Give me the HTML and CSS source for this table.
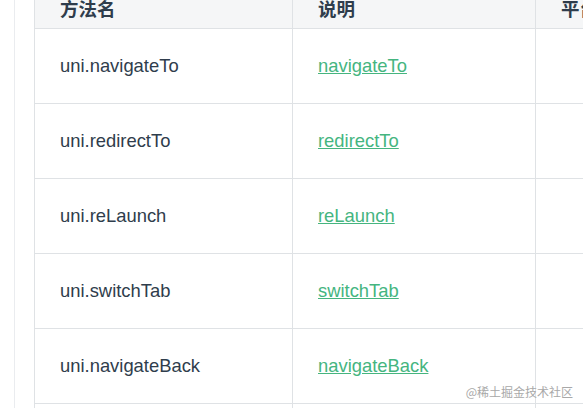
FILE: index.html
```html
<!DOCTYPE html>
<html lang="zh-CN">
<head>
<meta charset="utf-8">
<link rel="stylesheet" href="styles.css">
</head>
<body>
<div class="page">
  <div class="content">
    <table class="api-table">
      <thead>
        <tr><th class="c1">方法名</th><th class="c2">说明</th><th class="c3">平台差异说明</th></tr>
      </thead>
      <tbody>
        <tr><td>uni.navigateTo</td><td><a href="#">navigateTo</a></td><td></td></tr>
        <tr><td>uni.redirectTo</td><td><a href="#">redirectTo</a></td><td></td></tr>
        <tr><td>uni.reLaunch</td><td><a href="#">reLaunch</a></td><td></td></tr>
        <tr><td>uni.switchTab</td><td><a href="#">switchTab</a></td><td></td></tr>
        <tr><td>uni.navigateBack</td><td><a href="#">navigateBack</a></td><td></td></tr>
        <tr><td>uni.preloadPage</td><td><a href="#">preloadPage</a></td><td></td></tr>
      </tbody>
    </table>
  </div>
  <div class="watermark">@稀土掘金技术社区</div>
</div>
</body>
</html>
```
FILE: styles.css
```css
html, body {
  margin: 0;
  padding: 0;
  background: #fff;
  overflow: hidden;
  width: 583px;
  height: 408px;
}
.page {
  position: relative;
  height: 408px;
  padding-left: 14px;
  overflow: hidden;
  font-family: "Liberation Sans", Arial, "Noto Sans CJK SC", sans-serif;
  color: #2f3d4c;
}
.content {
  border-left: 1px solid #eaecef;
  padding-left: 19px;
  min-height: 420px;
}
.api-table {
  border-collapse: collapse;
  margin-top: -13px;
  font-size: 18.4px;
  table-layout: fixed;
  width: 700px;
}
.api-table th,
.api-table td {
  border: 1px solid #dfe2e5;
  padding: 0 25px;
  text-align: left;
  vertical-align: middle;
  white-space: nowrap;
}
.api-table th {
  height: 40px;
  font-size: 18.5px;
  font-weight: 700;
  background: #f5f6f7;
  font-family: "Noto Sans CJK SC", sans-serif;
}
.api-table td {
  height: 74px;
}
.c1 { width: 207px; }
.c2 { width: 192px; }
.c3 { width: 200px; }
.api-table a {
  color: #45b57f;
  text-decoration: underline;
}
.watermark {
  position: absolute;
  right: 10px;
  top: 383px;
  font-family: "Noto Sans CJK SC", sans-serif;
  font-size: 12px;
  color: #a8a8a8;
}
```
